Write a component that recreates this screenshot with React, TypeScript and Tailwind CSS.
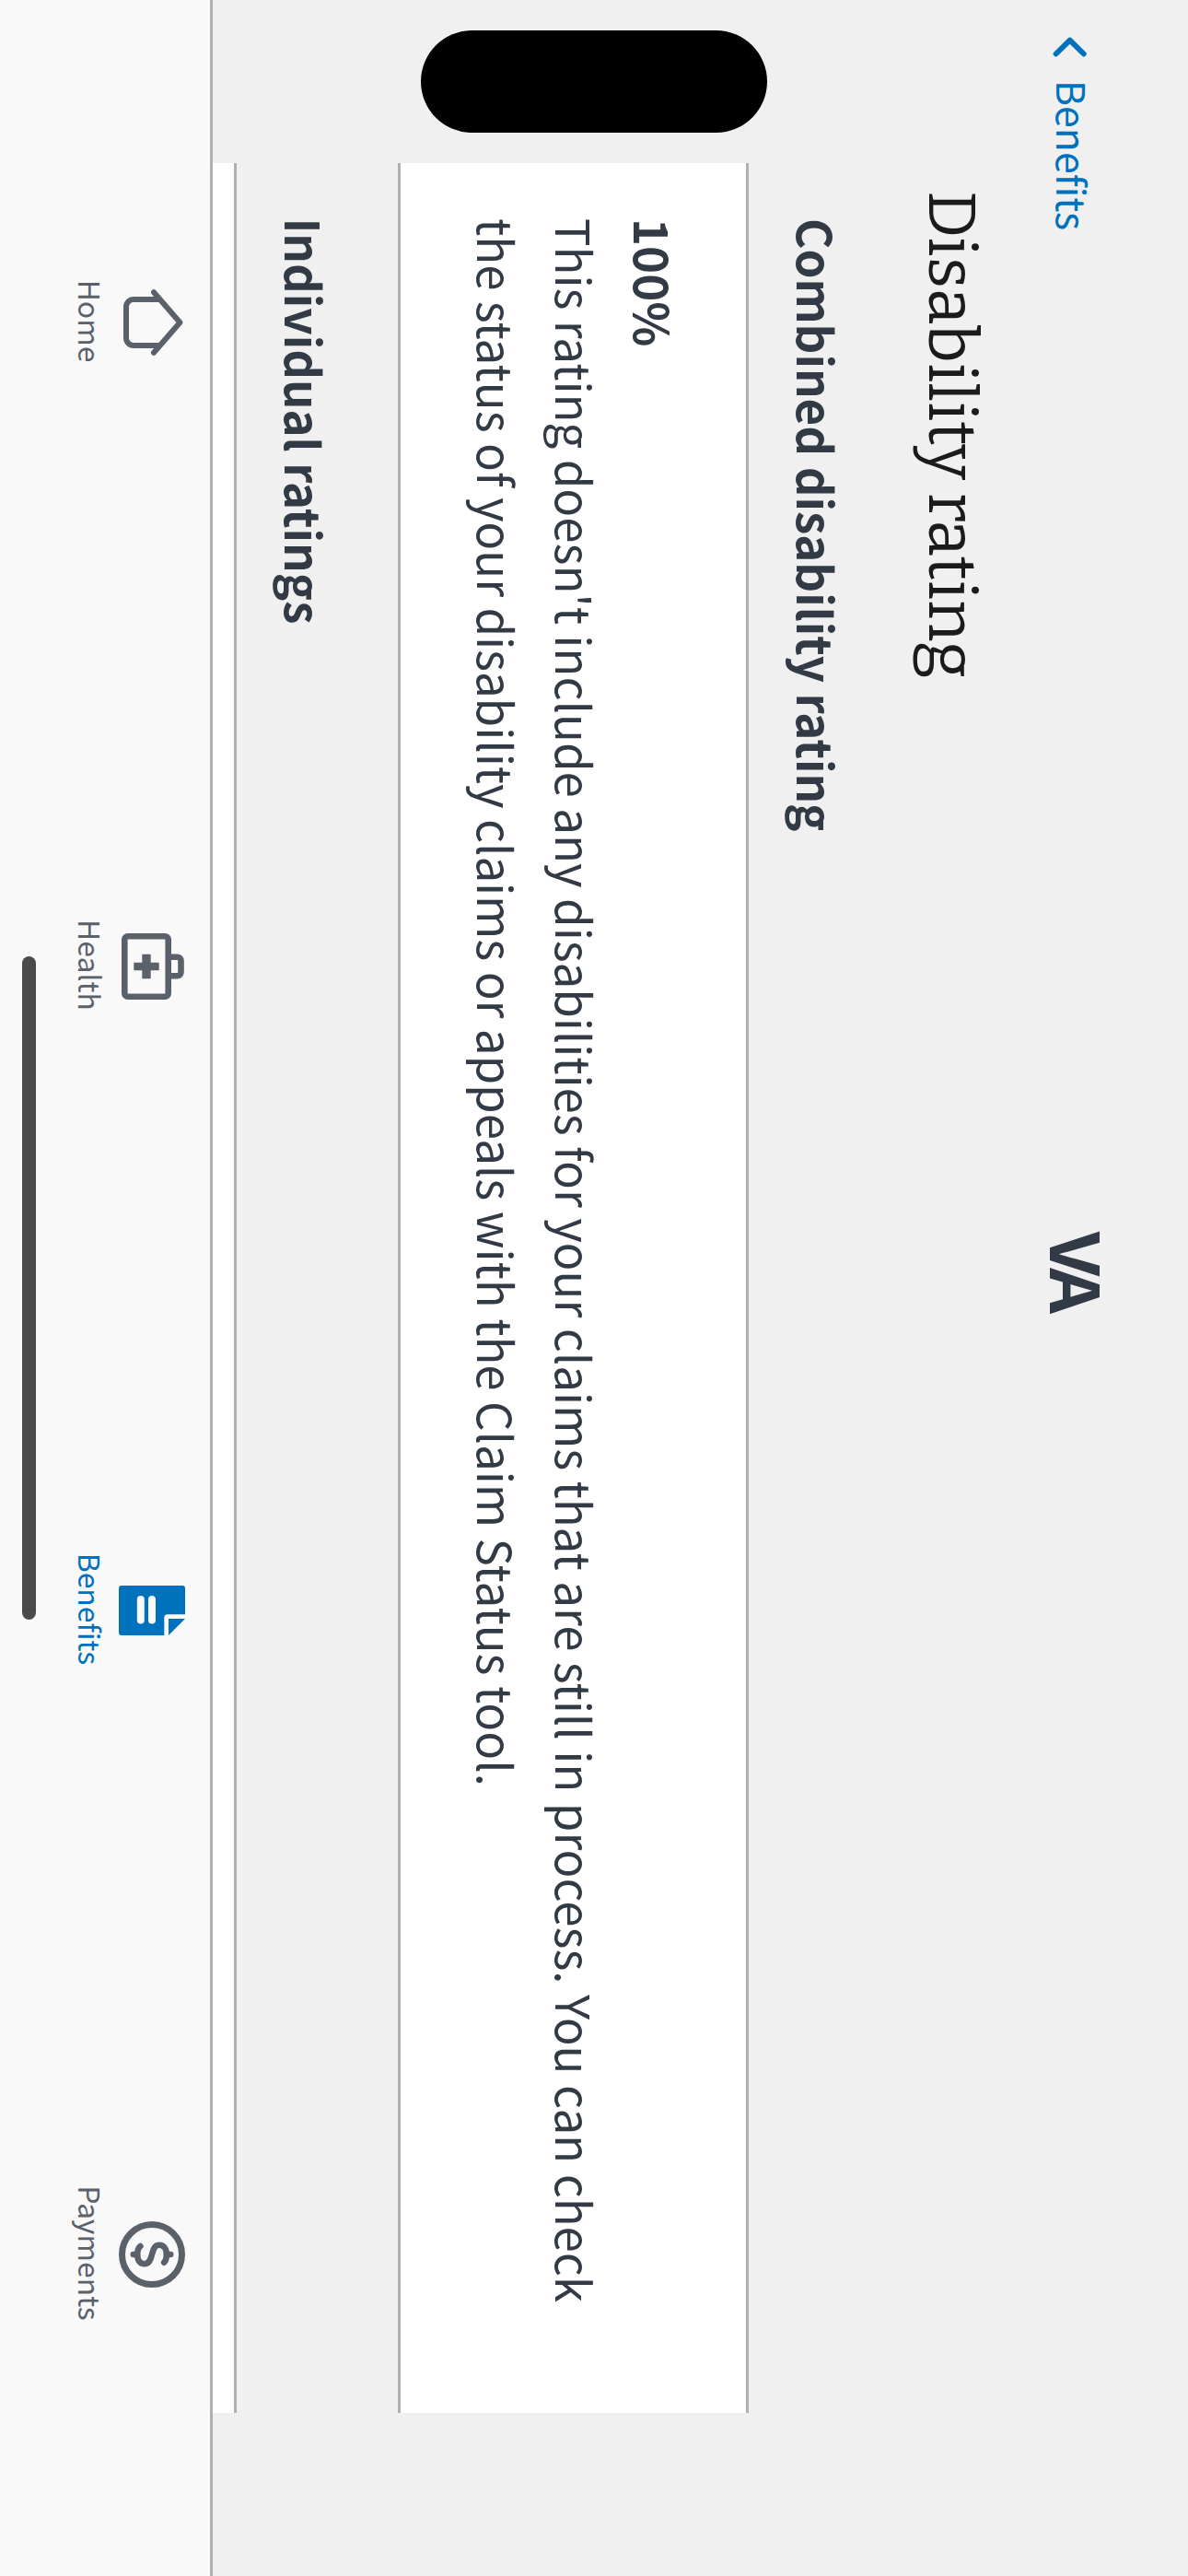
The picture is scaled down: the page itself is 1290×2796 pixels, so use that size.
import type { ReactNode } from 'react';

function HomeIcon() {
  return (
    <svg className="size-[72px]" viewBox="0 0 72 72" fill="none" stroke="currentColor" strokeWidth="6">
      <path d="M3.2 34 36 5.6 68.8 34" strokeLinecap="round" strokeLinejoin="round" />
      <path d="M11 28v28a8 8 0 0 0 8 8h34a8 8 0 0 0 8-8V28" />
    </svg>
  );
}

function HealthIcon() {
  return (
    <svg className="size-[72px]" viewBox="0 0 72 72" fill="none" stroke="currentColor" strokeWidth="6.6">
      <rect x="3.3" y="18.3" width="65.4" height="47.4" rx="3.4" />
      <path d="M25.7 18V8.5a4 4 0 0 1 4-4h12.6a4 4 0 0 1 4 4V18" />
      <path
        d="M32.4 28.3h7.2a.7.7 0 0 1 .7.7v8.3h8.3a.7.7 0 0 1 .7.7v8a.7.7 0 0 1-.7.7h-8.3V55a.7.7 0 0 1-.7.7h-7.2a.7.7 0 0 1-.7-.7v-8.3h-8.3a.7.7 0 0 1-.7-.7v-8a.7.7 0 0 1 .7-.7h8.3V29a.7.7 0 0 1 .7-.7Z"
        fill="currentColor"
        stroke="none"
      />
    </svg>
  );
}

function BenefitsIcon() {
  return (
    <svg className="size-[72px]" viewBox="0 0 72 72" fill="currentColor">
      <path d="M12 0h28.3v19.2a3.5 3.5 0 0 0 3.5 3.5H63V69a3 3 0 0 1-3 3H12a3 3 0 0 1-3-3V3a3 3 0 0 1 3-3Z" />
      <path d="M45 0v18h18Z" />
      <rect x="20" y="32" width="30.5" height="8" rx="4" fill="#f9f9f9" />
      <rect x="20" y="44.2" width="30.5" height="8" rx="4" fill="#f9f9f9" />
    </svg>
  );
}

function PaymentsIcon() {
  return (
    <svg className="size-[72px]" viewBox="0 0 72 72" fill="none" stroke="currentColor" strokeLinecap="round">
      <circle cx="36" cy="36" r="32.5" strokeWidth="7" />
      <path
        d="M44.7 22.8C42.8 20.8 40 20.2 36 20.2c-6.5 0-10.2 3.2-10.2 7.8 0 5 4.2 6.5 10.2 8s10.300 3.2 10.300 8.300c0 4.700-3.800 7.500-10.300 7.500-4 0-7-.8-9-3.200"
        strokeWidth="6.600"
      />
      <path d="M36 15.7V20M36 52v4.3" strokeWidth="6.4" />
    </svg>
  );
}

function Tab({ label, icon, active = false }: { label: string; icon: ReactNode; active?: boolean }) {
  return (
    <div className={`flex flex-1 flex-col items-center pt-[27px] ${active ? 'text-[#0071bc]' : 'text-[#5b616b]'}`}>
      {icon}
      <span className="mt-[6.4px] pr-[2px] text-[31.9px] leading-[48px]">{label}</span>
    </div>
  );
}

export default function App() {
  return (
    <div className="h-[2796px] w-[1290px] overflow-hidden bg-[#f0f0f0]">
      <div className="relative flex h-[1290px] w-[2796px] origin-top-left translate-x-[1290px] rotate-90 flex-col bg-[#f0f0f0] font-['Noto_Sans_CJK_JP','Noto_Sans',sans-serif] text-[#323a45]">
        <header className="flex h-[221.4px] items-start">
          <div className="flex w-[1337px] items-center pt-[92px] pl-[38px] text-[#0071bc]">
            <svg className="h-12 w-6" viewBox="0 0 24 48" fill="none" stroke="currentColor" strokeWidth="5.9">
              <path d="M20.500 13.200 5.600 28.300l14.900 15.100" strokeLinecap="round" strokeLinejoin="round" />
            </svg>
            <span className="ml-[25px] text-[42.8px] leading-[64px]">Benefits</span>
          </div>
          <span className="mt-[86px] origin-left scale-x-106 text-[73.3px] leading-[64px] font-bold tracking-[-7px]">
            VA
          </span>
        </header>

        <h1 className="h-[138.6px] pl-[207px] font-['Bitter','DejaVu_Serif_Condensed',serif] text-[71.8px] leading-[72px] text-[#1b1b1b]">
          Disability rating
        </h1>

        <main className="flex h-[699px] flex-col px-[177px] text-[51px] leading-[85px]">
          <h2 className="h-[117px] pt-px pl-[60px] font-bold">Combined disability rating</h2>
          <section className="h-[381px] border-y-3 border-[#aeb0b5] bg-white px-[60px] pt-[58px]">
            <p className="font-bold">100%</p>
            <p className="whitespace-nowrap">
              This rating doesn't include any disabilities for your claims that are still in process. You can check
              <br />
              the status of your disability claims or appeals with the Claim Status tool.
            </p>
          </section>
          <h2 className="h-[175px] pt-[59px] pl-[59.4px] font-bold">Individual ratings</h2>
          <section className="h-[26px] border-t-3 border-[#aeb0b5] bg-white" />
        </main>

        <nav className="flex h-[231px] border-t-3 border-[#aeb0b5] bg-[#f9f9f9]">
          <Tab label="Home" icon={<HomeIcon />} />
          <Tab label="Health" icon={<HealthIcon />} />
          <Tab label="Benefits" icon={<BenefitsIcon />} active />
          <Tab label="Payments" icon={<PaymentsIcon />} />
        </nav>

        <div className="absolute top-[457px] left-[33.4px] h-[376px] w-[111px] rounded-full bg-black" />
        <div className="absolute top-[1251px] left-[1038px] h-[15px] w-[720px] rounded-full bg-[#4a4a4a]" />
      </div>
    </div>
  );
}
